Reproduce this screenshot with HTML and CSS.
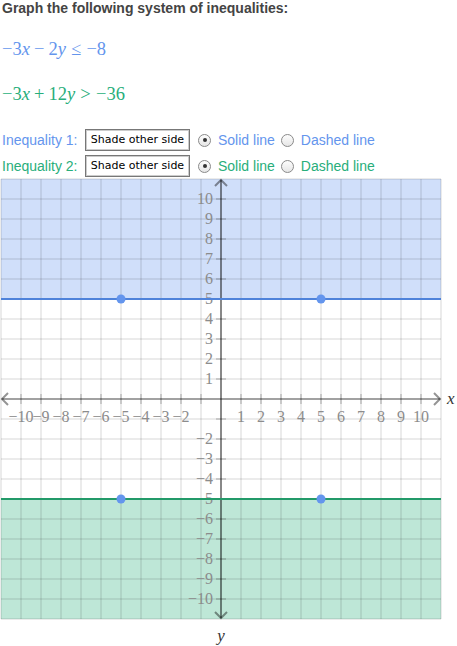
FILE: index.html
```html
<!DOCTYPE html>
<html>
<head>
<meta charset="utf-8">
<link rel="stylesheet" href="styles.css">
</head>
<body>
<div class="title">Graph the following system of inequalities:</div>
<div class="math blue m1"><span class="num">−3</span><i>x</i><span class="op">−</span><span class="num">2</span><i>y</i><span class="rel">≤</span><span class="num">−8</span></div>
<div class="math green m2"><span class="num">−3</span><i>x</i><span class="op">+</span><span class="num">12</span><i>y</i><span class="rel">&gt;</span><span class="num">−36</span></div>
<div class="row r1 blue">
  <span class="lbl">Inequality 1:</span>
  <span class="btn">Shade other side</span>
  <span class="radio on"></span><span class="opt">Solid line</span>
  <span class="radio"></span><span class="opt">Dashed line</span>
</div>
<div class="row r2 green">
  <span class="lbl">Inequality 2:</span>
  <span class="btn">Shade other side</span>
  <span class="radio on"></span><span class="opt">Solid line</span>
  <span class="radio"></span><span class="opt">Dashed line</span>
</div>
<svg class="graph" width="457" height="468" viewBox="0 0 457 468" xmlns="http://www.w3.org/2000/svg">
  <rect x="1" y="1" width="440" height="120" fill="rgba(100,149,237,0.3)"/>
  <rect x="1" y="321" width="440" height="120" fill="rgba(40,174,123,0.3)"/>
  <g stroke="rgba(0,0,0,0.08)" stroke-width="2" id="grid"></g>
  <g stroke="rgba(0,0,0,0.42)" stroke-width="2" fill="none">
    <line x1="2" y1="221" x2="440" y2="221" stroke-width="1.5"/>
    <line x1="221" y1="2" x2="221" y2="440"/>
    <polyline points="8,215 2,221 8,227"/>
    <polyline points="434,215 440,221 434,227"/>
    <polyline points="215,8 221,2 227,8"/>
    <polyline points="215,434 221,440 227,434"/>
  </g>
  <g stroke="rgba(0,0,0,0.3)" stroke-width="1" id="ticks"></g>
  <g class="lab" id="labels"></g>
  <line x1="1" y1="121" x2="441" y2="121" stroke="#4f83da" stroke-width="2"/>
  <line x1="1" y1="321" x2="441" y2="321" stroke="#239a69" stroke-width="2"/>
  <circle cx="121" cy="121" r="4.5" fill="#6495ed"/>
  <circle cx="321" cy="121" r="4.5" fill="#6495ed"/>
  <circle cx="121" cy="321" r="4.5" fill="#6495ed"/>
  <circle cx="321" cy="321" r="4.5" fill="#6495ed"/>
  <text class="axl" x="447" y="226">x</text>
  <text class="axl" x="221" y="463" text-anchor="middle">y</text>
</svg>
<script src="graph.js"></script>
</body>
</html>
```

FILE: graph.js
```js
(function () {
  var ns = "http://www.w3.org/2000/svg";
  var grid = document.getElementById("grid");
  var ticks = document.getElementById("ticks");
  var labels = document.getElementById("labels");
  function el(name, attrs, parent) {
    var e = document.createElementNS(ns, name);
    for (var k in attrs) e.setAttribute(k, attrs[k]);
    parent.appendChild(e);
    return e;
  }
  for (var i = 0; i <= 22; i++) {
    var p = 1 + i * 20;
    el("line", { x1: p, y1: 1, x2: p, y2: 441 }, grid);
    el("line", { x1: 1, y1: p, x2: 441, y2: p }, grid);
  }
  for (var v = -10; v <= 10; v++) {
    if (v === 0) continue;
    var px = 221 + v * 20;
    var py = 221 - v * 20;
    el("line", { x1: px, y1: 216, x2: px, y2: 226 }, ticks);
    el("line", { x1: 216, y1: py, x2: 226, y2: py }, ticks);
    var s = (v < 0 ? "\u2212" : "") + Math.abs(v);
    if (v !== -1) {
      var t = el("text", { x: px, y: 244, "text-anchor": "middle" }, labels);
      t.textContent = s;
      var t2 = el("text", { x: 213, y: py + 5, "text-anchor": "end" }, labels);
      t2.textContent = s;
    }
  }
})();
```

FILE: styles.css
```css
html, body {
  margin: 0;
  padding: 0;
  background: #fff;
}
body {
  width: 457px;
  height: 646px;
  overflow: hidden;
  font-family: "Liberation Sans", Arial, sans-serif;
}
.title {
  font-weight: bold;
  font-size: 14px;
  line-height: 16px;
  color: #444;
  padding-left: 2px;
}
.math {
  font-family: "Liberation Serif", "Times New Roman", serif;
  font-size: 18.5px;
  line-height: 22px;
  height: 22px;
  padding-left: 2px;
  white-space: nowrap;
}
.math i {
  font-style: italic;
}
.m1 { margin-top: 22px; }
.m2 { margin-top: 23px; }
.op { margin: 0 0.22em; }
.rel { margin: 0 0.28em; }
.blue { color: #6495ed; }
.green { color: #28ae7b; }
.row {
  display: flex;
  align-items: center;
  height: 22px;
  font-size: 14px;
  padding-left: 2px;
  white-space: nowrap;
}
.r1 { margin-top: 24px; }
.r2 { margin-top: 4px; }
.lbl { width: 83px; }
.btn {
  box-sizing: border-box;
  width: 105px;
  height: 22px;
  border: 1px solid #777;
  box-shadow: inset 0 0 0 1px #ccc;
  background: #fff;
  color: #000;
  font-family: "DejaVu Sans", "Liberation Sans", sans-serif;
  font-size: 11px;
  line-height: 20px;
  text-align: center;
  margin-right: 8px;
}
.radio {
  box-sizing: border-box;
  width: 13px;
  height: 13px;
  border-radius: 50%;
  border: 1px solid #8a8a8a;
  background: linear-gradient(#fdfdfd, #e6e6e6);
  margin-right: 7px;
  position: relative;
}
.radio.on::after {
  content: "";
  position: absolute;
  left: 3.5px;
  top: 3.5px;
  width: 4px;
  height: 4px;
  border-radius: 50%;
  background: #333;
}
.opt { margin-right: 6px; }
.graph {
  display: block;
  margin-top: 1px;
}
.lab text {
  font-family: "Liberation Serif", "Times New Roman", serif;
  font-size: 16px;
  fill: #8c8c8c;
}
.axl {
  font-family: "Liberation Serif", "Times New Roman", serif;
  font-style: italic;
  font-size: 17px;
  fill: #333;
}
```
